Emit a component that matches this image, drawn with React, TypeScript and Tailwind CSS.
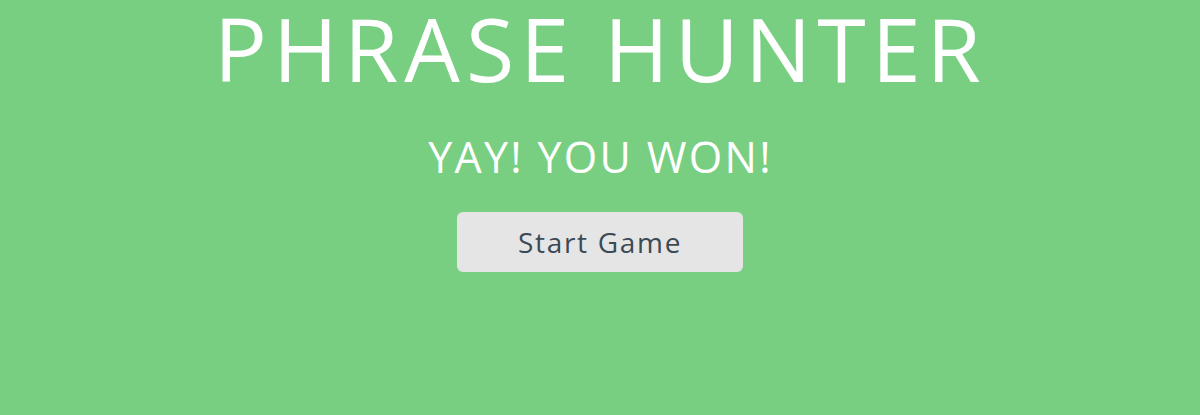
import React from "react";

const App = () => {
  return (
    <div className="min-h-[415px] w-full bg-[#78cf82] flex flex-col items-center font-['Open_Sans',sans-serif] text-white">
      {/* Header */}
      <h1 className="pl-[1px] text-[88px] leading-[96px] font-normal tracking-[6px]">PHRASE HUNTER</h1>

      {/* Result */}
      <h2 className="mt-[39px] pl-[1px] text-[43px] leading-none font-normal tracking-[2.3px]">YAY! YOU WON!</h2>

      {/* Button */}
      <button className="mt-[34px] w-[286px] h-[60px] rounded-[6px] bg-[#e5e5e5] text-[#3b4a54] text-[28px] font-normal tracking-[1.7px]">
        Start Game
      </button>
    </div>
  );
};

export default App;
